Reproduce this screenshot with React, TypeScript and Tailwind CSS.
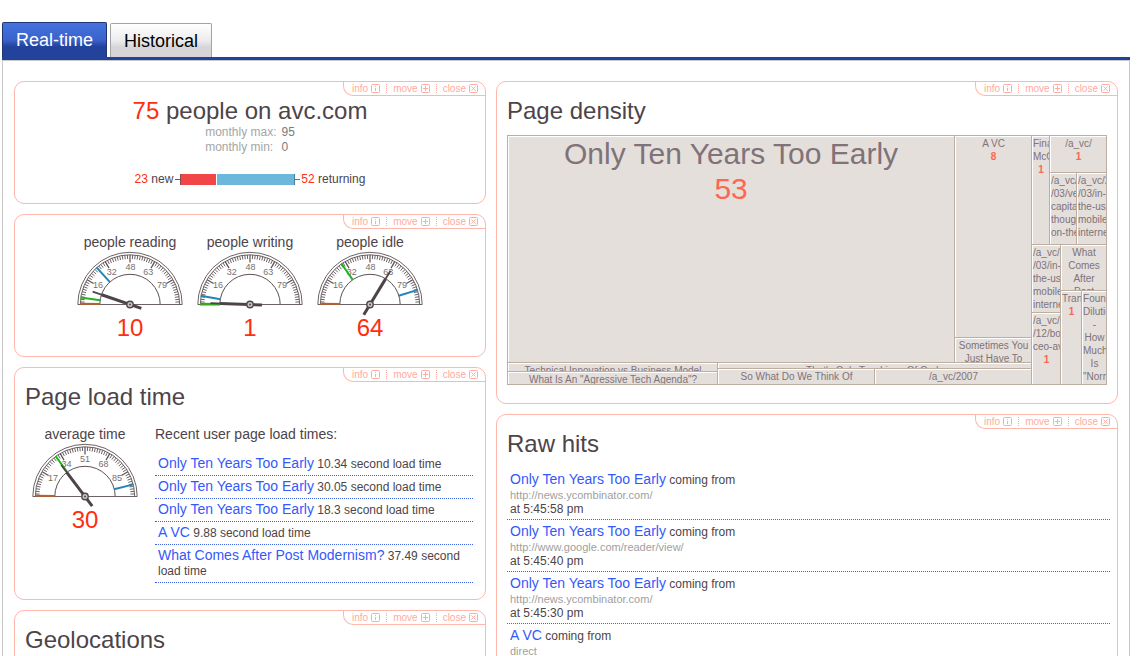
import { useState } from "react";
import type { ReactNode } from "react";
import clsx from "clsx";

type ToolName = "info" | "move" | "close";

interface Marker {
  angle: number;
  color: string;
}

interface GaugeProps {
  label: string;
  value: number;
  max: number;
  scale: number[];
  markers: Marker[];
}

const BROWN = "#b4602f";
const GREEN = "#22b31c";
const BLUE = "#2385b5";

const tools: ToolName[] = ["info", "move", "close"];

const peopleGauges: GaugeProps[] = [
  {
    label: "people reading",
    value: 10,
    max: 95,
    scale: [16, 32, 48, 63, 79],
    markers: [
      { angle: 1, color: BROWN },
      { angle: 8, color: GREEN },
      { angle: 48, color: BLUE },
    ],
  },
  {
    label: "people writing",
    value: 1,
    max: 95,
    scale: [16, 32, 48, 63, 79],
    markers: [
      { angle: 0, color: BROWN },
      { angle: 1, color: GREEN },
      { angle: 10, color: BLUE },
    ],
  },
  {
    label: "people idle",
    value: 64,
    max: 95,
    scale: [16, 32, 48, 63, 79],
    markers: [
      { angle: 1, color: BROWN },
      { angle: 55, color: GREEN },
      { angle: 163, color: BLUE },
    ],
  },
];

const loadGauge: GaugeProps = {
  label: "average time",
  value: 30,
  max: 102,
  scale: [17, 34, 51, 68, 85],
  markers: [
    { angle: 1, color: BROWN },
    { angle: 54, color: GREEN },
    { angle: 166, color: BLUE },
  ],
};

const loadTimes = [
  { title: "Only Ten Years Too Early", seconds: "10.34" },
  { title: "Only Ten Years Too Early", seconds: "30.05" },
  { title: "Only Ten Years Too Early", seconds: "18.3" },
  { title: "A VC", seconds: "9.88" },
  { title: "What Comes After Post Modernism?", seconds: "37.49" },
];

const hits = [
  { title: "Only Ten Years Too Early", from: "http://news.ycombinator.com/", at: "5:45:58 pm" },
  { title: "Only Ten Years Too Early", from: "http://www.google.com/reader/view/", at: "5:45:40 pm" },
  { title: "Only Ten Years Too Early", from: "http://news.ycombinator.com/", at: "5:45:30 pm" },
  { title: "A VC", from: "direct", at: "5:45:27 pm" },
];

function ToolIcon({ name }: { name: ToolName }) {
  return (
    <svg width="9" height="9" viewBox="0 0 9 9" fill="none" stroke="currentColor" aria-hidden="true">
      <rect x="0.5" y="0.5" width="8" height="8" rx="1" />
      {name === "info" && <path d="M4.5 2v1M4.5 4v3" />}
      {name === "move" && <path d="M4.5 2v5M2 4.5h5" />}
      {name === "close" && <path d="M2.3 2.3l4.4 4.4M6.7 2.3L2.3 6.7" strokeWidth="0.9" />}
    </svg>
  );
}

function Card({ title, className, children }: { title?: string; className?: string; children?: ReactNode }) {
  return (
    <section className={clsx("flex flex-col rounded-[10px] border border-[#ffb6ab]", className)}>
      <div className="flex h-[14px] items-center self-end rounded-bl-[10px] border-b border-l border-[#ffb6ab] pr-px pl-[2px] text-[10px] leading-[12px] text-[#ffaa9e]">
        {tools.map((name, i) => (
          <button
            key={name}
            type="button"
            className={clsx(
              "flex h-[9px] cursor-pointer items-center gap-[3px] px-[6px]",
              i > 0 && "border-l border-dotted border-[#ffaa9e]"
            )}
          >
            {name}
            <ToolIcon name={name} />
          </button>
        ))}
      </div>
      {title && <h2 className="px-[10px] pt-[2px] text-[24px] leading-[26px]">{title}</h2>}
      {children}
    </section>
  );
}

const CX = 60;
const CY = 54.5;

function polar(angle: number, r: number) {
  const rad = (angle * Math.PI) / 180;
  return { x: CX - r * Math.cos(rad), y: CY - r * Math.sin(rad) };
}

function Spoke({ angle, from, to, width, color }: { angle: number; from: number; to: number; width: number; color: string }) {
  const a = polar(angle, from);
  const b = polar(angle, to);
  return <line x1={a.x} y1={a.y} x2={b.x} y2={b.y} stroke={color} strokeWidth={width} />;
}

function Gauge({ label, value, max, scale, markers }: GaugeProps) {
  const needle = (value / max) * 180;
  return (
    <div className="flex w-[120px] flex-none flex-col items-center">
      <div className="text-[14px] leading-[16px]">{label}</div>
      <svg width="120" height="64" viewBox="0 0 120 64" fill="none" className="overflow-visible" role="img" aria-label={`${label}: ${value}`}>
        <path d="M7.8 54.5a52.2 52.2 0 0 1 104.4 0z" stroke="#5b5054" strokeWidth="0.9" />
        <path d="M10.3 54.5a49.7 49.7 0 0 1 99.4 0" stroke="#5b5054" strokeWidth="0.9" />
        <path d="M29.8 54.5a30.2 30.2 0 0 1 60.4 0" stroke="#5b5054" strokeWidth="1" />
        {Array.from({ length: 59 }, (_, i) => i + 1).map((i) => (
          <Spoke key={i} angle={i * 3} from={i % 10 === 0 ? 42 : 45.5} to={49.5} width={i % 10 === 0 ? 1.2 : 0.9} color="#5b5054" />
        ))}
        {scale.map((n) => {
          const p = polar((n / max) * 180, 37);
          return (
            <text key={n} x={p.x} y={p.y + 2.5} textAnchor="middle" fontSize="9" fill="#77706f">
              {n}
            </text>
          );
        })}
        {markers.map((m) => (
          <Spoke key={m.angle} angle={m.angle} from={30} to={50} width={2} color={m.color} />
        ))}
        <Spoke angle={needle} from={20} to={39.5} width={1.8} color="#4d4449" />
        <Spoke angle={needle} from={-12} to={30} width={3} color="#4d4449" />
        <circle cx={CX} cy={CY} r="3.2" fill="#cdc8c8" stroke="#4d4449" strokeWidth="1.4" />
        <circle cx={CX} cy={CY} r="1" fill="#4d4449" />
      </svg>
      <div className="text-[24px] leading-[28px] text-[#fe2e10]">{value}</div>
    </div>
  );
}

// The border sits on the inner box so the outer one can shrink to its exact share.
function Cell({ lines, count, className }: { lines: string[]; count?: number; className: string }) {
  return (
    <div className={clsx("flex min-h-0 min-w-0 basis-0", className)}>
      <div className="min-w-0 grow overflow-hidden border-t border-l border-[#bdaea2] bg-[#e4dfdb] pt-px pl-px text-center text-[10px] leading-[13px] whitespace-nowrap text-[#7f7279] shadow-[inset_1px_1px_0_#fff]">
        {lines.map((line, i) => (
          <div key={i}>{line}</div>
        ))}
        {count !== undefined && <div className="font-bold text-[#ff6650]">{count}</div>}
      </div>
    </div>
  );
}

function DensityMap() {
  return (
    <div className="mx-[10px] mt-[11px] mb-[18px] flex h-[250px] overflow-hidden border-r border-b border-[#bdaea2]">
      <div className="flex min-w-0 grow-[524] basis-0 flex-col">
        <div className="flex min-h-0 grow-[227] basis-0">
          <div className="min-w-0 grow-[447] basis-0 overflow-hidden border-t border-l border-[#bdaea2] bg-[#e4dfdb] text-center text-[30px] leading-[35px] text-[#7f7279] shadow-[inset_1px_1px_0_#fff]">
            <div>Only Ten Years Too Early</div>
            <div className="text-[#ff6650]">53</div>
          </div>
          <div className="flex min-w-0 grow-[77] basis-0 flex-col">
            <Cell className="grow-[202]" lines={["A VC"]} count={8} />
            <Cell className="grow-[25]" lines={["Sometimes You", "Just Have To"]} />
          </div>
        </div>
        <div className="flex h-[22px] flex-none">
          <div className="flex min-w-0 grow-[210] basis-0 flex-col">
            <Cell className="grow-[9]" lines={["Technical Innovation vs Business Model"]} />
            <Cell className="grow-[13]" lines={['What Is An "Agressive Tech Agenda"?']} />
          </div>
          <div className="flex min-w-0 grow-[314] basis-0 flex-col">
            <Cell className="grow-[6]" lines={["That's Only Two Lines Of Code"]} />
            <div className="flex min-h-0 grow-[16] basis-0">
              <Cell className="grow-[157]" lines={["So What Do We Think Of"]} />
              <Cell className="grow-[157]" lines={["/a_vc/2007"]} />
            </div>
          </div>
        </div>
      </div>
      <div className="flex min-w-0 grow-[75] basis-0 flex-col">
        <div className="flex min-h-0 grow-[109] basis-0">
          <Cell className="grow-[18]" lines={["Fina", "McC"]} count={1} />
          <div className="flex min-w-0 grow-[57] basis-0 flex-col">
            <Cell className="grow-[37]" lines={["/a_vc/"]} count={1} />
            <div className="flex min-h-0 grow-[72] basis-0">
              <Cell className="grow-[27]" lines={["/a_vc/", "/03/ve", "capita", "though", "on-the"]} />
              <Cell className="grow-[30]" lines={["/a_vc/2", "/03/in-", "the-us-", "mobile", "interne"]} />
            </div>
          </div>
        </div>
        <div className="flex min-h-0 grow-[140] basis-0">
          <div className="flex min-w-0 grow-[29] basis-0 flex-col">
            <Cell className="grow-[68]" lines={["/a_vc/2", "/03/in-", "the-us-", "mobile", "interne"]} />
            <Cell className="grow-[72]" lines={["/a_vc/2", "/12/bo", "ceo-av"]} count={1} />
          </div>
          <div className="flex min-w-0 grow-[46] basis-0 flex-col">
            <Cell className="grow-[46]" lines={["What", "Comes", "After", "Post"]} />
            <div className="flex min-h-0 grow-[94] basis-0">
              <Cell className="grow-[21]" lines={["Tran"]} count={1} />
              <Cell className="grow-[25]" lines={["Foun", "Dilutio", "-", "How", "Much", "Is", '"Norm']} />
            </div>
          </div>
        </div>
      </div>
    </div>
  );
}

export default function App() {
  const [tab, setTab] = useState<"real-time" | "historical">("real-time");
  const activeTab =
    "border-[#1f3474] bg-linear-to-b from-[#4472de] via-[#3a63cb] via-50% to-[#22429b] to-70% text-white";
  const idleTab = "border-[#a3a3a3] bg-linear-to-b from-white via-[#ececee] via-50% to-[#d6d6d8] to-70% text-black";

  return (
    <div className="flex h-screen flex-col overflow-hidden bg-white pt-[22px] pr-[17px] pl-[2px] font-['Liberation_Sans',Arial,sans-serif] text-[#4d4449]">
      <nav className="flex flex-none items-end gap-[3px] border-b-[3px] border-[#22429b] text-[18px] leading-[20px]">
        <button
          type="button"
          onClick={() => setTab("real-time")}
          className={clsx("h-[35px] cursor-pointer rounded-t-[2px] border border-b-0 px-[13px]", tab === "real-time" ? activeTab : idleTab)}
        >
          Real-time
        </button>
        <button
          type="button"
          onClick={() => setTab("historical")}
          className={clsx("h-[34px] cursor-pointer rounded-t-[2px] border border-b-0 px-[13px]", tab === "historical" ? activeTab : idleTab)}
        >
          Historical
        </button>
      </nav>

      <main className="grid flex-none grid-cols-[472fr_622fr] items-start gap-[10px] border-x border-t border-[#c8c8c8] px-[11px] pt-[20px] pb-[20px]">
        <div className="flex min-w-0 flex-col gap-[10px]">
          <Card>
            <h1 className="pt-[2px] text-center text-[24px] leading-[26px]">
              <span className="text-[#fe2e10]">75</span> people on avc.com
            </h1>
            <dl className="mx-auto grid grid-cols-[auto_auto] gap-x-[5px] pt-px text-[12px] leading-[15px]">
              <dt className="text-[#a5a5a5]">monthly max:</dt>
              <dd className="text-[#7b7b7b]">95</dd>
              <dt className="text-[#a5a5a5]">monthly min:</dt>
              <dd className="text-[#7b7b7b]">0</dd>
            </dl>
            <div className="mt-[17px] mb-[16px] flex items-center justify-center text-[12px] leading-[15px]">
              <span>
                <span className="text-[#fe2e10]">23</span> new
              </span>
              <span className="ml-[2px] h-px w-[5px] bg-[#8b4a4e]" />
              <span className="flex h-[11px] w-[115px] gap-px">
                <span className="grow-[23] border-l border-[#8b4a4e] bg-[#f24548]" />
                <span className="grow-[52] border-r border-[#4d7f99] bg-[#6cb7dc]" />
              </span>
              <span className="mr-px h-px w-[5px] bg-[#4d7f99]" />
              <span>
                <span className="text-[#fe2e10]">52</span> returning
              </span>
            </div>
          </Card>

          <Card>
            <div className="flex justify-center pt-[5px] pb-[14px]">
              {peopleGauges.map((g) => (
                <Gauge key={g.label} {...g} />
              ))}
            </div>
          </Card>

          <Card title="Page load time">
            <div className="flex gap-[10px] pt-[16px] pr-[12px] pb-[16px] pl-[10px]">
              <Gauge {...loadGauge} />
              <div className="min-w-0 grow">
                <h3 className="text-[14px] leading-[16px]">Recent user page load times:</h3>
                <ul className="mt-[11px]">
                  {loadTimes.map((item, i) => (
                    <li key={i} className="border-b border-dotted border-[#3f62e8] px-[3px] py-[3px] text-[12px] leading-[15px]">
                      <a href="#page" className="text-[14px] text-[#3558fb]">
                        {item.title}
                      </a>{" "}
                      {item.seconds} second load time
                    </li>
                  ))}
                </ul>
              </div>
            </div>
          </Card>

          <Card title="Geolocations" className="min-h-[160px]" />
        </div>

        <div className="flex min-w-0 flex-col gap-[10px]">
          <Card title="Page density">
            <DensityMap />
          </Card>

          <Card title="Raw hits">
            <ul className="mt-[11px] mr-[7px] mb-[15px] ml-[10px]">
              {hits.map((hit) => (
                <li key={hit.at} className="border-b border-dotted border-[#3f62e8] px-[3px] pt-[4px] pb-[3px] text-[12px] leading-[14px]">
                  <div className="leading-[15px]">
                    <a href="#page" className="text-[14px] text-[#3558fb]">
                      {hit.title}
                    </a>{" "}
                    coming from
                  </div>
                  <div className="text-[11px] text-[#a0a0a0]">{hit.from}</div>
                  <div>at {hit.at}</div>
                </li>
              ))}
            </ul>
          </Card>
        </div>
      </main>
    </div>
  );
}
